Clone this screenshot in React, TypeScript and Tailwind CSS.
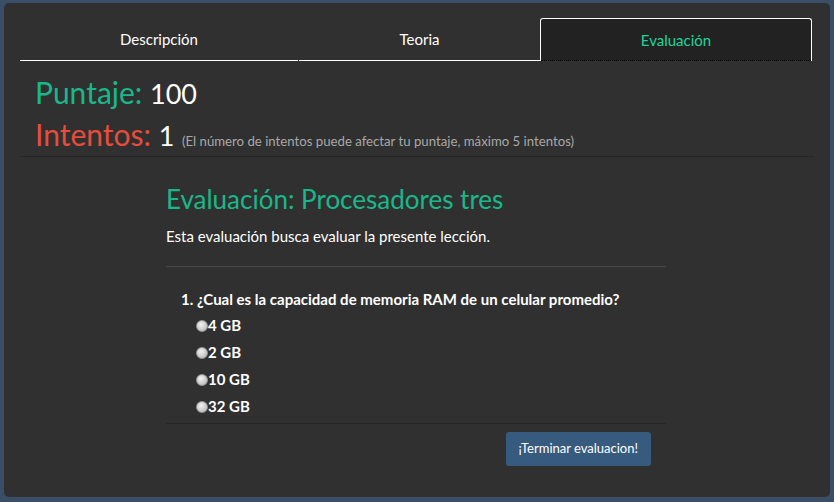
const TABS = ['Descripción', 'Teoria', 'Evaluación'];
const OPTIONS = ['4 GB', '2 GB', '10 GB', '32 GB'];

export default function App() {
  const active = 2;
  return (
    <div className="w-[834px] h-[502px] bg-[#3a4f67] pt-[3px] pl-[4px] pr-[4px] pb-[5px] font-['Lato',sans-serif]">
      <div className="h-full bg-[#303030] rounded-[5px] pt-[15px] px-[16px] pb-4">
        {/* Tabs */}
        <div className="flex h-[43px]">
          {TABS.map((t, i) =>
            i === active ? (
              <div key={t} className="w-[272px] flex items-center justify-center bg-[#222] border border-b-0 border-white rounded-t-[3px] relative">
                <span className="text-[15px] text-[#1ed597]">{t}</span>
                <div className="absolute left-0 right-0 bottom-0 border-b border-dotted border-black" />
              </div>
            ) : (
              <div key={t} className={`${i === 0 ? 'w-[278px]' : 'w-[241px] ml-[1px]'} flex items-center justify-center border-b border-white`}>
                <span className="text-[15px] text-white">{t}</span>
              </div>
            )
          )}
        </div>

        {/* Score */}
        <div className="px-[15px] pt-[13px] border-b border-[#262626]">
          <div className="text-[30px] leading-[36px]">
            <span className="text-[#19b88a]">Puntaje:</span> <span className="text-white text-[27px]">100</span>
          </div>
          <div className="mt-[7px] leading-[30px] text-[30px]">
            <span className="text-[#e74c3c]">Intentos:</span> <span className="text-white text-[27px]">1</span>{' '}
            <span className="text-[13.2px] text-[#a8a8a8]">(El número de intentos puede afectar tu puntaje, máximo 5 intentos)</span>
          </div>
        </div>

        {/* Evaluation */}
        <div className="w-[500px] ml-[146px]">
          <h2 className="text-[26px] text-[#19b88a] mt-[26px] leading-[32px]">Evaluación: Procesadores tres</h2>
          <p className="text-[15px] text-white mt-[11px] leading-[20px]">Esta evaluación busca evaluar la presente lección.</p>
          <div className="mt-[20px] border-t border-[#474747]" />
          <div className="border-b border-[#262626] pl-[15px] pt-[22px] pb-[3px]">
            <p className="text-[15px] font-bold text-white leading-[20px]">1. ¿Cual es la capacidad de memoria RAM de un celular promedio?</p>
            <div className="pl-[15px] mt-[3px]">
              {OPTIONS.map(o => (
                <label key={o} className="flex items-center h-[27px] text-[15px] font-bold text-white">
                  <span className="w-[12px] h-[12px] rounded-full bg-[radial-gradient(circle_at_40%_35%,#f2f2f2,#b0b0b0)] border border-[#969696]" />
                  {o}
                </label>
              ))}
            </div>
          </div>
          <div className="flex justify-end pr-[15px] pt-[8px]">
            <button className="bg-[#375a7f] text-white text-[13px] h-[34px] px-[13px] rounded-[3px]">¡Terminar evaluacion!</button>
          </div>
        </div>
      </div>
    </div>
  );
}
